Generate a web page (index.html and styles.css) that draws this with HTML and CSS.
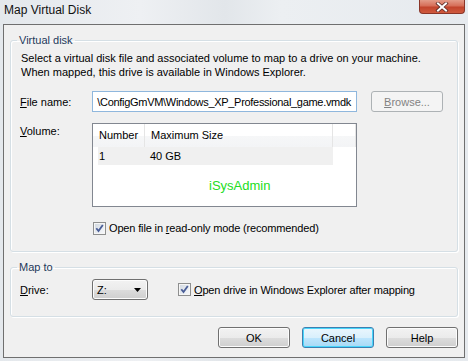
FILE: index.html
```html
<!DOCTYPE html>
<html lang="en">
<head>
    <meta charset="UTF-8">
    <title>Map Virtual Disk</title>
    <link rel="stylesheet" href="styles.css">
</head>
<body>
    <div class="window">
        <div class="titlebar">
            <span class="title">Map Virtual Disk</span>
            <span class="close">
                <svg width="14" height="10" viewBox="0 0 14 10">
                    <path d="M3 1.5 L11 8.5 M11 1.5 L3 8.5" stroke="#5a2a26" stroke-width="3.6" stroke-linecap="square"/>
                    <path d="M3 1.5 L11 8.5 M11 1.5 L3 8.5" stroke="#ffffff" stroke-width="2" stroke-linecap="square"/>
                </svg>
            </span>
        </div>

        <div class="client">
            <!-- Virtual disk group -->
            <fieldset class="group group-disk">
                <legend>Virtual disk</legend>
                <p class="intro">Select a virtual disk file and associated volume to map to a drive on your machine.<br>When mapped, this drive is available in Windows Explorer.</p>

                <div class="row row-file">
                    <label class="lbl"><u>F</u>ile name:</label>
                    <div class="textbox"><span>\ConfigGmVM\Windows_XP_Professional_game.vmdk</span></div>
                    <button class="btn btn-browse" disabled><u>B</u>rowse...</button>
                </div>

                <div class="row row-volume">
                    <label class="lbl"><u>V</u>olume:</label>
                    <div class="listview">
                        <div class="lv-head">
                            <span class="col1">Number</span>
                            <span class="col2">Maximum Size</span>
                            <span class="col3"></span>
                        </div>
                        <div class="lv-row">
                            <span class="col1">1</span>
                            <span class="col2">40 GB</span>
                        </div>
                        <span class="watermark">iSysAdmin</span>
                    </div>
                </div>

                <div class="check-row check-readonly">
                    <span class="checkbox">
                        <svg width="11" height="11" viewBox="0 0 11 11"><path d="M2.3 5.2 L4.5 8 L8.8 2" fill="none" stroke="#4a5e97" stroke-width="1.8"/></svg>
                    </span>
                    <span>Open file in <u>r</u>ead-only mode (recommended)</span>
                </div>
            </fieldset>

            <!-- Map to group -->
            <fieldset class="group group-map">
                <legend>Map to</legend>
                <div class="row row-drive">
                    <label class="lbl"><u>D</u>rive:</label>
                    <div class="combo">
                        <span>Z:</span>
                        <svg width="7" height="4" viewBox="0 0 7 4"><path d="M0 0 H7 L3.5 4 Z" fill="#000"/></svg>
                    </div>
                    <div class="check-row check-open">
                        <span class="checkbox">
                            <svg width="11" height="11" viewBox="0 0 11 11"><path d="M2.3 5.2 L4.5 8 L8.8 2" fill="none" stroke="#4a5e97" stroke-width="1.8"/></svg>
                        </span>
                        <span><u>O</u>pen drive in Windows Explorer after mapping</span>
                    </div>
                </div>
            </fieldset>

            <div class="buttons">
                <button class="btn">OK</button>
                <button class="btn btn-default">Cancel</button>
                <button class="btn">Help</button>
            </div>
        </div>
    </div>
</body>
</html>
```

FILE: styles.css
```css
body {
    margin: 0;
    font-family: "Liberation Sans", Arial, sans-serif;
    font-size: 11px;
    color: #000;
}
.window {
    width: 468px;
    height: 361px;
    background: linear-gradient(90deg, #e4e8ec 0%, #eef0f3 30%, #e2e6ea 48%, #eceff2 60%, #e6eaee 100%);
    display: flex;
    flex-direction: column;
}
.titlebar {
    height: 24px;
    display: flex;
    justify-content: space-between;
    align-items: flex-start;
}
.title {
    font-size: 12px;
    line-height: 20px;
    padding-left: 4px;
    color: #111;
}
.close {
    width: 46px;
    height: 14px;
    margin-right: 3px;
    box-sizing: border-box;
    border: 1px solid #8a3528;
    border-top: none;
    border-radius: 0 0 4px 4px;
    background: linear-gradient(#e39b88 0%, #d66e58 45%, #c2442c 55%, #cf5a3e 100%);
    display: flex;
    justify-content: center;
    align-items: center;
}
.client {
    flex: 1;
    margin: 0 3px 3px 3px;
    border: 1px solid #6f6f6f;
    background: #f0f0f0;
    display: flex;
    flex-direction: column;
}
.group {
    margin: 0 6px;
    padding: 0 9px;
    border: 1px solid #d5dfe5;
    border-radius: 3px;
    box-shadow: inset 1px 1px 0 #fff, 1px 1px 0 #fff;
    min-width: 0;
}
.group legend {
    padding: 0 2px;
    margin-left: -3px;
    line-height: 14px;
    color: #1e395b;
}
.group-disk {
    margin-top: 8px;
    padding-bottom: 16px;
}
.group-map {
    margin-top: 8px;
    padding-top: 5px;
    padding-bottom: 16px;
}
.intro {
    margin: 4px 0 0 1px;
    line-height: 14px;
}
.row {
    display: flex;
    align-items: flex-start;
}
.lbl {
    width: 72px;
    flex: none;
    line-height: 14px;
}
.row-file {
    margin-top: 12px;
    align-items: center;
}
.textbox {
    width: 265px;
    height: 21px;
    flex: none;
    box-sizing: border-box;
    border: 1px solid #8fb7dd;
    background: #fff;
    display: flex;
    justify-content: flex-end;
    align-items: center;
    overflow: hidden;
    white-space: nowrap;
    padding-right: 5px;
    letter-spacing: -0.3px;
}
.btn {
    font-family: inherit;
    font-size: 11px;
    width: 72px;
    height: 21px;
    padding: 0;
    border: 1px solid #707070;
    border-radius: 3px;
    background: linear-gradient(#f2f2f2 0%, #ebebeb 50%, #dddddd 51%, #cfcfcf 100%);
    box-shadow: inset 0 0 0 1px #fcfcfc;
    color: #000;
}
.btn-browse {
    margin-left: 14px;
    border-color: #adb2b5;
    background: #f4f4f4;
    box-shadow: none;
    color: #838383;
}
.btn-default {
    border-color: #3c7fb1;
    background: linear-gradient(#eaf6fd 0%, #d9f0fc 50%, #bee6fd 51%, #a7d9f5 100%);
    box-shadow: inset 0 0 0 1px #48d6fb;
}
.row-volume {
    margin-top: 11px;
}
.row-volume .lbl {
    margin-top: 1px;
}
.listview {
    position: relative;
    width: 265px;
    height: 84px;
    box-sizing: border-box;
    border: 1px solid #828790;
    background: #fff;
}
.lv-head {
    display: flex;
    height: 23px;
    line-height: 23px;
    background: linear-gradient(#ffffff 0%, #ffffff 50%, #f6f7f8 51%, #f3f4f6 100%);
}
.lv-head span {
    box-sizing: border-box;
    border-right: 1px solid #e5e5e5;
    padding-left: 6px;
}
.lv-head .col1 {
    width: 52px;
}
.lv-head .col2 {
    width: 188px;
}
.lv-head .col3 {
    flex: 1;
}
.lv-row {
    display: flex;
    margin-left: 5px;
    width: 235px;
    height: 18px;
    line-height: 18px;
    background: #f0f0f0;
}
.lv-row .col1 {
    width: 47px;
    padding-left: 1px;
}
.lv-row .col2 {
    padding-left: 4px;
}
.watermark {
    position: absolute;
    left: 116px;
    top: 54px;
    font-size: 13px;
    line-height: 16px;
    color: #22dd22;
}
.check-row {
    display: flex;
    align-items: center;
    line-height: 14px;
    letter-spacing: -0.15px;
}
.check-readonly {
    margin-top: 14px;
    margin-left: 73px;
}
.checkbox {
    width: 13px;
    height: 13px;
    box-sizing: border-box;
    border: 1px solid #8e8f8f;
    background: linear-gradient(135deg, #cfd6de 0%, #eef1f5 70%, #f8f9fb 100%);
    box-shadow: inset 0 0 0 1px #f6f6f6;
    display: flex;
    justify-content: center;
    align-items: center;
    margin-right: 3px;
    flex: none;
}
.row-drive {
    align-items: center;
}
.combo {
    width: 56px;
    height: 21px;
    box-sizing: border-box;
    border: 1px solid #707070;
    border-radius: 3px;
    background: linear-gradient(#f2f2f2 0%, #ebebeb 50%, #dddddd 51%, #cfcfcf 100%);
    box-shadow: inset 0 0 0 1px #fcfcfc;
    display: flex;
    justify-content: space-between;
    align-items: center;
    padding: 0 6px 0 4px;
}
.check-open {
    margin-left: 30px;
}
.buttons {
    display: flex;
    justify-content: flex-end;
    gap: 12px;
    margin-top: 10px;
    padding-right: 6px;
}
```
